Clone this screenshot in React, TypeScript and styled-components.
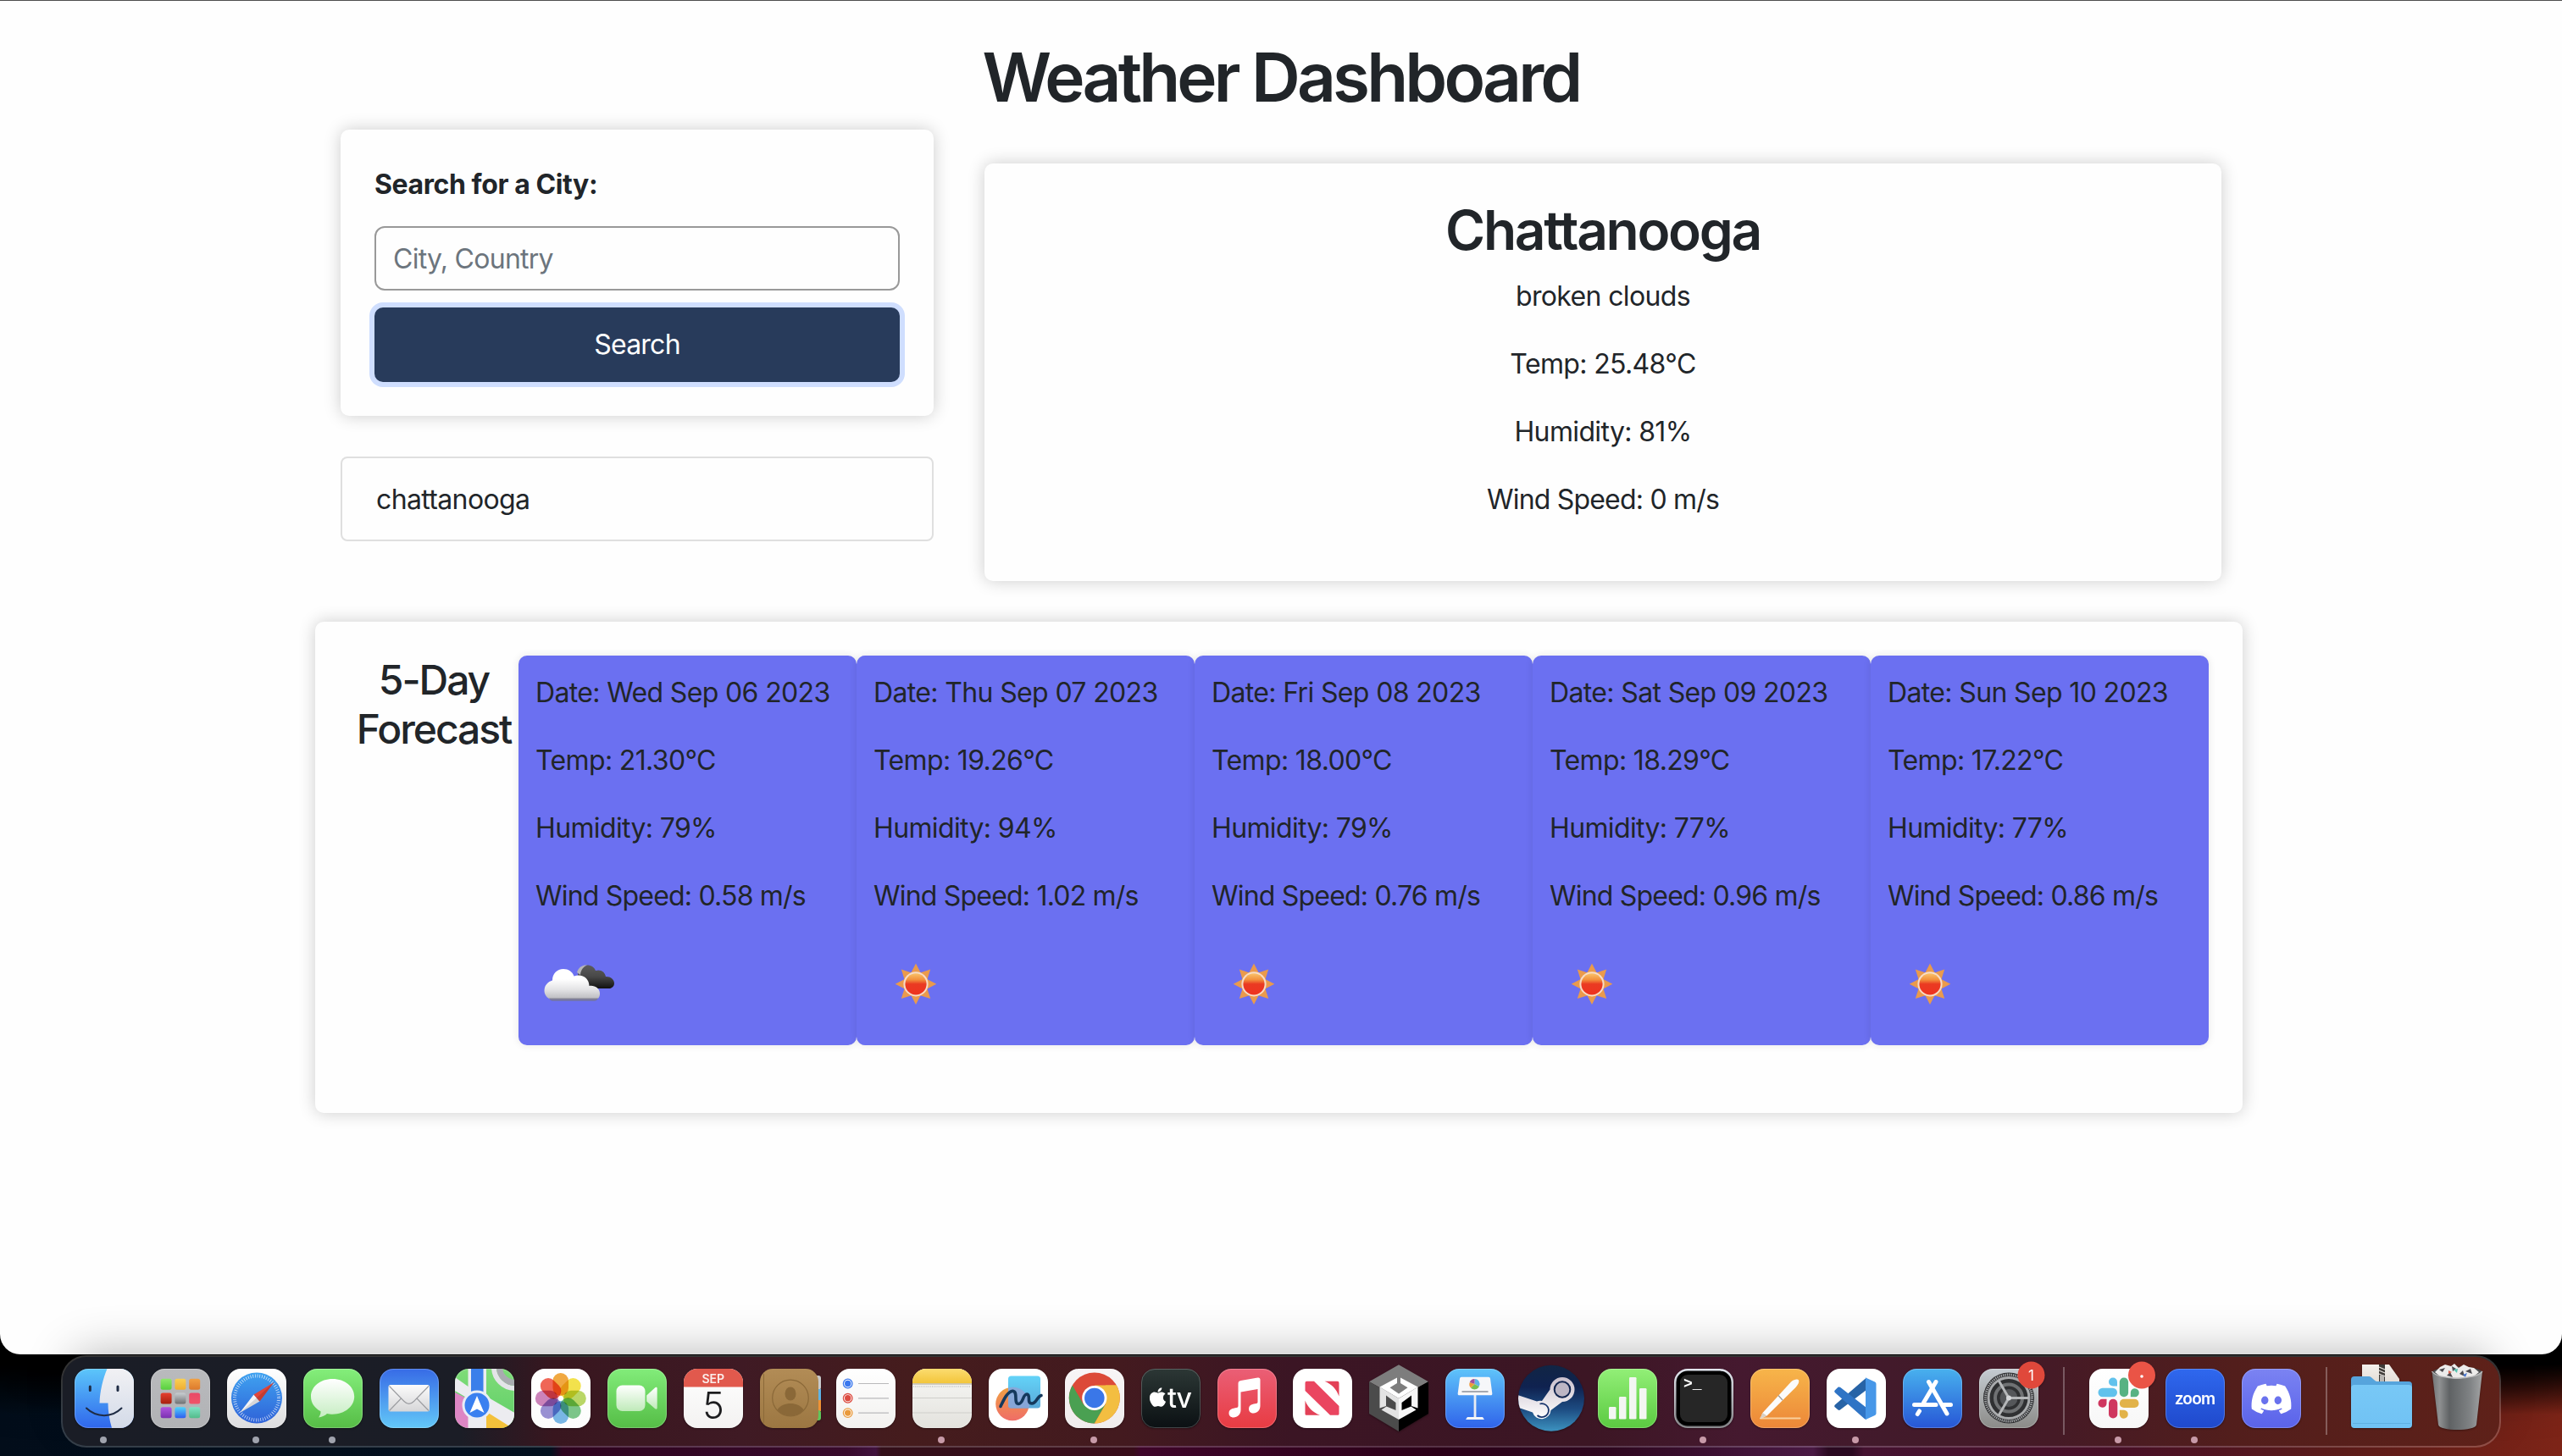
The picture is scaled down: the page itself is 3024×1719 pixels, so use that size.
import React from "react";
import styled, { createGlobalStyle } from "styled-components";
import { FaApple, FaDiscord } from "react-icons/fa";

const GlobalStyle = createGlobalStyle`
  *, *::before, *::after { box-sizing: border-box; }
  html, body { margin: 0; padding: 0; }
  body {
    font-family: Inter, "Liberation Sans", sans-serif;
    font-size: 32px;
    line-height: 1.5;
    color: #212529;
    overflow: hidden;
  }
`;

const Desktop = styled.div`
  height: 1719px;
  display: flex;
  flex-direction: column;
  background:
    linear-gradient(180deg, #000 0, #000 30px, rgba(0, 0, 0, 0) 90px) 0 1580px / 100% 139px no-repeat,
    linear-gradient(90deg, #020d1a 0, #04111f 650px, #2f041f 664px, #3a0b2d 1000px, #431340 1034px, #35101a 1040px,
      #3a0d1a 1338px, #40062b 1346px, #2c0118 1700px, #2f0820 1900px, #4c1a46 2140px, #2c0a22 2158px, #2c0a22 2186px,
      #471332 2200px, #4a1028 2500px, #5d1c1a 2760px, #7d2417 3024px);
`;

const Window = styled.div`
  height: 1599px;
  flex: none;
  display: flex;
  flex-direction: column;
  background: #fefefe;
  border-top: 1px solid #4e4e4e;
  border-radius: 0 0 24px 24px;
  box-shadow: 0 0 0 1px #000, 0 20px 60px 10px rgba(0, 0, 0, 0.7);
`;

const PageTitle = styled.h1`
  margin: 40px 0 16px;
  padding-top: 2px;
  height: 96px;
  font-size: 80px;
  line-height: 96px;
  font-weight: 570;
  letter-spacing: -0.048em;
  text-align: center;
`;

const Columns = styled.div`
  display: grid;
  grid-template-columns: 700px 1460px;
  column-gap: 60px;
  justify-content: center;
  align-items: start;
`;

const Panel = styled.section`
  background: #fefefe;
  border-radius: 10px;
  padding: 40px;
  box-shadow: 0 0 20px rgba(0, 0, 0, 0.2);
`;

const Sidebar = styled.div`
  display: flex;
  flex-direction: column;
  gap: 48px;
`;

const SearchForm = styled(Panel)`
  height: 338px;
  display: flex;
  flex-direction: column;
`;

const Label = styled.label`
  font-weight: 700;
  letter-spacing: -0.013em;
  margin: 1px 0 25px;
`;

const CityInput = styled.input`
  height: 76px;
  border: 2px solid #999;
  border-radius: 12px;
  padding: 0 20px;
  font: inherit;
  letter-spacing: -0.023em;
  background: #fefefe;
  outline: none;
  &::placeholder { color: #6c757d; opacity: 1; }
`;

const SearchButton = styled.button`
  height: 88px;
  margin-top: 20px;
  border: 0;
  border-radius: 10px;
  background: #283b5b;
  color: #fff;
  font: inherit;
  letter-spacing: -0.024em;
  box-shadow: 0 0 0 6px #cfdefe;
`;

const HistoryItem = styled.div`
  height: 100px;
  display: flex;
  align-items: center;
  padding: 6px 40px 4px;
  border: 2px solid #dfdfdf;
  border-radius: 8px;
  letter-spacing: -0.02em;
`;

const CurrentWeather = styled(Panel)`
  margin-top: 40px;
  text-align: center;
`;

const CityName = styled.h2`
  margin: 0 0 16px;
  font-size: 64px;
  line-height: 77px;
  font-weight: 560;
  letter-spacing: -0.036em;
`;

const Fact = styled.p<{ $tight?: boolean }>`
  margin: 0 0 32px;
  line-height: 48px;
  letter-spacing: ${(p) => (p.$tight ? "-0.025em" : "-0.02em")};
  white-space: nowrap;
`;

const Forecast = styled(Panel)`
  width: 2275px;
  margin: 48px 0 0 372px;
  padding-bottom: 80px;
  display: grid;
  grid-template-columns: 200px repeat(5, 399px);
`;

const ForecastTitle = styled.h3`
  margin: 0;
  font-size: 48px;
  line-height: 57.6px;
  font-weight: 550;
  letter-spacing: -0.043em;
  text-align: center;
`;

const DayCard = styled.article`
  height: 460px;
  padding: 20px;
  border-radius: 10px;
  background: #6b70f1;
  box-shadow: 0 0 10px rgba(0, 0, 0, 0.1);
`;

const DayIcon = styled.svg`
  display: block;
  width: 100px;
  height: 100px;
`;

/* Dock */

const DockBar = styled.nav`
  width: 2880px;
  height: 109px;
  flex: none;
  margin: 1px 0 0 72px;
  padding: 14px 3px 0 4px;
  display: flex;
  align-items: flex-start;
  border: 2px solid rgba(255, 255, 255, 0.2);
  border-radius: 30px;
  background: linear-gradient(90deg, #1a1d26 0, #1b1d26 470px, #38161f 580px, #3f1a24 800px, #451c1d 1000px,
    #431a1f 1250px, #3b1524 1450px, #3c1624 1800px, #45192f 1980px, #421a2b 2150px, #451a26 2350px, #521e1c 2560px, #5e2119 2880px);
  background-clip: padding-box;
  box-shadow: 0 -16px 56px -16px rgba(0, 0, 0, 0.3);
  position: relative;
`;

const DockItem = styled.div<{ $w?: number }>`
  flex: 0 0 ${(p) => p.$w ?? 89.92}px;
  display: flex;
  flex-direction: column;
  align-items: center;
`;

const AppIcon = styled.svg`
  display: block;
  width: 70px;
  height: 70px;
  overflow: visible;
  filter: drop-shadow(0 1px 1px rgba(0, 0, 0, 0.35));
`;

const RunningDot = styled.i<{ $cool?: boolean }>`
  width: 8px;
  height: 8px;
  margin: 10px 2px 0 0;
  border-radius: 50%;
  background: ${(p) => (p.$cool ? "#a0a3ad" : "#c79aa8")};
`;

const Divider = styled.hr`
  width: 2px;
  height: 80px;
  margin: -2px 19px 0;
  border: 0;
  flex: none;
  background: rgba(255, 255, 255, 0.28);
`;

const Grad = ({ id, stops, x2 = 0, y2 = 1 }: { id: string; stops: string[]; x2?: number; y2?: number }) => (
  <linearGradient id={id} x1="0" y1="0" x2={x2} y2={y2}>
    {stops.map((c, i) => (
      <stop key={i} offset={i / (stops.length - 1)} stopColor={c} />
    ))}
  </linearGradient>
);

const Tile = ({ id, stops }: { id: string; stops: string[] }) => (
  <>
    <defs>
      <Grad id={id} stops={stops} />
      <clipPath id={id + "-clip"}>
        <rect width="70" height="70" rx="16" />
      </clipPath>
    </defs>
    <rect width="70" height="70" rx="16" fill={`url(#${id})`} />
    <rect x=".5" y=".5" width="69" height="69" rx="15.5" fill="none" stroke="#fff" strokeOpacity=".22" />
  </>
);

const Finder = () => (
  <>
    <Tile id="finder" stops={["#5cc6fa", "#2f66ec"]} />
    <defs><Grad id="finder-r" stops={["#f1f1f4", "#d3dae8"]} /></defs>
    <path clipPath="url(#finder-clip)" d="M38.5 0C33.500 12 30 26 29.500 40.500H39.500C39.500 50 41 60 44 70H70V0Z" fill="url(#finder-r)" />
    <g stroke="#1f2c44" strokeLinecap="round" fill="none">
      <path d="M18.300 21V25.500M51 21V25.500" strokeWidth="3" />
      <path d="M14 46.500C26 58 44 58 55.500 46.500" strokeWidth="2" />
    </g>
  </>
);

const padColors = [
  ["#8fe96c", "#58cf3e"], ["#fad053", "#efae33"], ["#f1a144", "#dd7a2c"],
  ["#e5402f", "#a7200f"], ["#c9ced2", "#6f7173"], ["#e94a68", "#f05468"],
  ["#b054df", "#7a30b0"], ["#4fd3fb", "#2f5cf0"], ["#7fe3c6", "#53bb8a"],
];
const Launchpad = () => (
  <>
    <Tile id="pad" stops={["#b9babd", "#b1b2b5"]} />
    {padColors.map((c, i) => (
      <g key={i}>
        <defs><Grad id={`pad${i}`} stops={c} /></defs>
        <rect x={11.6 + (i % 3) * 16.8} y={11.7 + Math.floor(i / 3) * 16.8} width="13" height="13" rx="2.500" fill={`url(#pad${i})`} />
      </g>
    ))}
  </>
);

const Safari = () => (
  <>
    <Tile id="safari" stops={["#ffffff", "#dcdcde"]} />
    <defs><Grad id="safari-d" stops={["#3fa2f0", "#2f62d8"]} /></defs>
    <circle cx="35" cy="34.500" r="30" fill="url(#safari-d)" />
    <circle cx="35" cy="34.500" r="26" fill="none" stroke="#fff" strokeOpacity=".75" strokeWidth="4" strokeDasharray=".8 1.920" />
    <path d="M15 52 31.500 30.500 38.500 38.500Z" fill="#f4f4f6" />
    <path d="M55.500 16 31.500 30.500 38.500 38.500Z" fill="#e0453a" />
    <path d="M15 52 55.500 16 38.500 38.500Z" fill="#000" opacity=".12" />
  </>
);

const Messages = () => (
  <>
    <Tile id="msg" stops={["#84ee7b", "#56bd46"]} />
    <defs><Grad id="msg-b" stops={["#ffffff", "#c6edc2"]} /></defs>
    <path d="M34.600 12C20 12 9 21.200 9 32.800C9 40 13 46.300 20.500 50.300C20.800 53 19.500 55.500 18.200 57.500C22.500 57 26 55 28 53C30 53.500 32 53.700 34.600 53.700C49 53.700 60.200 44.500 60.200 32.800C60.200 21.200 49 12 34.600 12Z" fill="url(#msg-b)" />
  </>
);

const Mail = () => (
  <>
    <Tile id="mail" stops={["#376be6", "#63c8f8"]} />
    <defs><Grad id="mail-e" stops={["#fbfbfb", "#d6d6d8"]} /></defs>
    <rect x="10.500" y="19" width="48.500" height="31.500" rx="2.500" fill="url(#mail-e)" />
    <path d="M11.500 49.500 26 34.500M58 49.500 43.500 34.500M11.500 20.500 29 38.500C33 42.500 36.500 42.500 40.500 38.500L58 20.500" fill="none" stroke="#9b9ca0" strokeWidth="1.100" />
  </>
);

const Maps = () => (
  <>
    <Tile id="maps" stops={["#7fdc79", "#5fce66"]} />
    <g clipPath="url(#maps-clip)">
      <path d="M0 28V70H16V36Z" fill="#dd86c4" />
      <path d="M36 52H52L66 70H36Z" fill="#f3c13b" />
      <path d="M0 10 17 22V36L0 26Z" fill="#ececf0" />
      <path d="M36 32 74 54V74L36 50Z" fill="#ececf0" />
      <path d="M15.500 0H37V70H15.500Z" fill="#ececf0" />
      <path d="M19 0H33.500V40H19Z" fill="#3b7fea" />
      <circle cx="71" cy="-2" r="25" fill="none" stroke="#e4e4e8" strokeWidth="6" />
      <circle cx="71" cy="-2" r="18.500" fill="none" stroke="#a9abb0" strokeWidth="7" />
    </g>
    <circle cx="26" cy="43" r="17.500" fill="#e9edf6" />
    <circle cx="26" cy="43" r="14.500" fill="#3a80f0" />
    <path d="M26 32 34.500 52 26 47.500 17.500 52Z" fill="#fff" />
  </>
);

const petals = ["#f0a02e", "#f2df38", "#b4d456", "#6fc17d", "#6bb0e4", "#8f86cf", "#c877b4", "#ee5545"];
const Petal = styled.rect`
  mix-blend-mode: multiply;
`;
const Photos = () => (
  <>
    <Tile id="photos" stops={["#ffffff", "#fcfcfc"]} />
    {petals.map((c, i) => (
      <Petal key={c} x="25.500" y="5" width="18.500" height="27" rx="9.200" fill={c} fillOpacity=".9" transform={`rotate(${i * 45} 34.800 35)`} />
    ))}
  </>
);

const FaceTime = () => (
  <>
    <Tile id="ft" stops={["#82ec7a", "#55bd46"]} />
    <defs><Grad id="ft-w" stops={["#ffffff", "#bfeab9"]} /></defs>
    <rect x="10.500" y="19.500" width="34" height="30.500" rx="7" fill="url(#ft-w)" />
    <path d="M46.200 31.500 56 22.500C57.400 21.300 58.700 21.800 58.700 23.500V46C58.700 47.700 57.400 48.200 56 47L46.200 38.500Z" fill="url(#ft-w)" />
  </>
);

const Calendar = () => (
  <>
    <Tile id="cal" stops={["#ffffff", "#f3f2f1"]} />
    <path clipPath="url(#cal-clip)" d="M0 0H70V21.600H0Z" fill="#e1594d" />
    <text x="34.800" y="16.800" textAnchor="middle" fontSize="14" fontWeight="600" fill="#fbeeec">SEP</text>
    <text x="35" y="58.500" textAnchor="middle" fontSize="43" fontWeight="300" fill="#1d1d1f">5</text>
  </>
);

const Contacts = () => (
  <>
    <g>
      <rect x="62" y="8" width="10" height="17" rx="3" fill="#c9cacc" />
      <rect x="62" y="24" width="10" height="14" fill="#5fb4e6" />
      <rect x="62" y="37" width="10" height="13" fill="#ef9234" />
      <rect x="62" y="49" width="10" height="12" rx="3" fill="#5fc85b" />
    </g>
    <defs><Grad id="con" stops={["#b28c56", "#9c7742"]} /></defs>
    <rect width="69" height="70" rx="15" fill="url(#con)" />
    <path d="M4.500 6V64" stroke="#8c6a39" strokeWidth="1" />
    <circle cx="36" cy="34.500" r="21.300" fill="none" stroke="#8a6838" strokeWidth="1.200" />
    <ellipse cx="36" cy="29.500" rx="6.500" ry="8" fill="#8a6838" />
    <path d="M20.500 48.500C24 43 30 41 36 41C42 41 48 43 51.500 48.500C47 53.500 42 55.500 36 55.500C30 55.500 25 53.500 20.500 48.500Z" fill="#8a6838" />
  </>
);

const Reminders = () => (
  <>
    <Tile id="rem" stops={["#ffffff", "#f2f1ef"]} />
    {["#3a78ee", "#dc4c41", "#e99a3c"].map((c, i) => (
      <g key={c}>
        <circle cx="13.700" cy={17.5 + i * 17.3} r="5.300" fill="#fff" stroke={c} strokeWidth="1.300" />
        <circle cx="13.700" cy={17.5 + i * 17.3} r="3.700" fill={c} />
        <path d={`M26 ${17.5 + i * 17.3}H62`} stroke="#b9b9bb" strokeWidth="1.200" />
      </g>
    ))}
  </>
);

const Notes = () => (
  <>
    <Tile id="notes" stops={["#f8f8f6", "#e3e2dd"]} />
    <defs><Grad id="notes-y" stops={["#fbdc70", "#f3c53a"]} /></defs>
    <path clipPath="url(#notes-clip)" d="M0 0H70V17.200H0Z" fill="url(#notes-y)" />
    <path d="M0 18H70" stroke="#a9a494" strokeWidth="1.200" />
    <path d="M1 21H69" stroke="#aaa" strokeWidth="1" strokeDasharray="1 1.200" />
    <path d="M0 34.500H70M0 52H70" stroke="#cfcfcb" strokeWidth="1" />
  </>
);

const Freeform = () => (
  <>
    <Tile id="ff" stops={["#ffffff", "#ffffff"]} />
    <defs>
      <Grad id="ff-o" stops={["#f0a143", "#ef6d67"]} />
      <Grad id="ff-b" stops={["#63d3f8", "#59a9d9"]} />
    </defs>
    <circle cx="28" cy="41.500" r="19.800" fill="url(#ff-o)" />
    <rect x="23" y="8.500" width="38" height="38" rx="3.500" fill="url(#ff-b)" />
    <path d="M23 22.500A19.800 19.800 0 0 1 47.500 46.500H26.500A3.500 3.500 0 0 1 23 43Z" fill="#8ea5d6" opacity=".85" />
    <path d="M14 44.500C18 36 22 27 28.500 26.300C35 27 29 41 35 41.500C41 41.500 40 30 45 30C50.500 30.500 44 41 51 41C56 41 57 33 62 31.500" fill="none" stroke="#15395c" strokeWidth="3.600" strokeLinecap="round" strokeLinejoin="round" />
  </>
);

const Chrome = () => (
  <>
    <Tile id="chrome" stops={["#f8f5f6", "#efecec"]} />
    <circle cx="34.800" cy="34.500" r="30" fill="#dc4a38" />
    <path d="M8.800 19.500A30 30 0 0 0 34.800 64.500L47.800 42L34.800 49.500 21.800 42Z" fill="#4aa052" />
    <path d="M60.800 19.500A30 30 0 0 1 34.800 64.500L47.800 42V19.500Z" fill="#f3be41" />
    <path d="M34.800 19.500H60.800L47.800 28Z" fill="#f3be41" />
    <circle cx="34.800" cy="34.500" r="14.600" fill="#fff" />
    <circle cx="34.800" cy="34.500" r="11.800" fill="#3a77e8" />
  </>
);

const AppleTV = () => (
  <>
    <Tile id="tv" stops={["#2c3735", "#0b1013"]} />
    <FaApple x="6.500" y="20.500" size={26} color="#fff" />
    <text x="31" y="45.500" fontSize="32" fontWeight="500" letterSpacing="-1" fill="#fff">tv</text>
  </>
);

const Music = () => (
  <>
    <Tile id="music" stops={["#ea5f76", "#e83b42"]} />
    <path d="M24.500 17.500C24.500 15 25.500 14.300 27.500 13.900L47.500 10.500C49.500 10.200 50.500 11 50.500 13V43.500C50.500 49 47 52.500 42.500 52.500C39.500 52.500 37 50.500 37 47.500C37 42 42 41.800 46 41C47.200 40.700 47.500 40.200 47.500 39V24L27.500 27.500V48.500C27.500 54 23.500 57.500 19 57.500C15.500 57.500 13.500 55.300 13.500 52.500C13.500 47.500 18 46.800 22.500 46C24 45.600 24.500 45 24.500 43.500Z" fill="#fff" />
  </>
);

const News = () => (
  <>
    <Tile id="news" stops={["#ffffff", "#ffffff"]} />
    <path d="M14.500 17A2 2 0 0 1 16.500 14.800H25L54.500 44V52.500A2 2 0 0 1 52.500 54.800H44L14.500 26Z" fill="#ea4560" />
    <path d="M37.500 14.800H52.500A2 2 0 0 1 54.500 17V32.500C51.500 24 45.500 18 37.500 14.800Z" fill="#e34157" />
    <path d="M14.500 37.500C17.500 45.500 23.500 51.500 32 54.800H16.500A2 2 0 0 1 14.500 52.500Z" fill="#e34157" />
  </>
);

const Unity = () => (
  <>
    <path d="M35-4.800 70 15.200 35 34.500 0 15.200Z" fill="#7d7d7d" />
    <path d="M0 15.200 35 34.500V74L0 53Z" fill="#4b4b4b" />
    <path d="M70 15.200 35 34.500V74L70 53Z" fill="#000" />
    <path d="M33 10.500V17L24.500 22.300 35 29.500 45.500 22.300 37 17V10.500L57.500 21.500 35 35 12.500 21.500Z" fill="#fff" />
    <path d="M12.500 21.500 35 35V60L14.500 48.500 20.500 44.500 31.500 49V40L20 31.500V44L12.500 46.500Z" fill="#e3e3e3" />
    <path d="M57.500 21.500 35 35V60L55.500 48.500 49.500 44.500 38.500 49V40L50 31.500V44L57.500 46.500Z" fill="#f7f7f7" />
  </>
);

const Keynote = () => (
  <>
    <Tile id="key" stops={["#5fc4fa", "#2f63ea"]} />
    <path d="M33.600 30H36.400V58H33.600Z" fill="#e9ecf2" />
    <path d="M26 57H44L46 60H24Z" fill="#f4f5f8" />
    <path d="M19 9.800H51A2 2 0 0 1 53 11.500L55.300 29A2 2 0 0 1 53.300 31.300H16.700A2 2 0 0 1 14.700 29L17 11.500A2 2 0 0 1 19 9.800Z" fill="#f6f7f9" />
    <path d="M19.500 27H50.500" stroke="#8a8f98" strokeWidth="1.500" />
    <path d="M34.500 18V12A6 6 0 0 1 39.800 21Z" fill="#61b3e8" />
    <path d="M34.500 18 39.800 21A6 6 0 0 1 30 22.500Z" fill="#78bf55" />
    <path d="M34.500 18 30 22.500A6 6 0 0 1 28.800 16Z" fill="#ee9b3b" />
    <path d="M34.500 18 28.800 16A6 6 0 0 1 34.500 12Z" fill="#a4509c" />
  </>
);

const Steam = () => (
  <>
    <defs>
      <Grad id="steam" stops={["#112544", "#0f2250", "#1d4c82", "#3d93c0"]} />
      <Grad id="steam-w" stops={["#c9bfcc", "#ffffff"]} />
      <clipPath id="steam-clip"><circle cx="35" cy="34.800" r="39" /></clipPath>
    </defs>
    <circle cx="35" cy="34.800" r="39" fill="url(#steam)" />
    <g clipPath="url(#steam-clip)">
      <path d="M-6 30.500 18 38.500A11 11 0 0 1 24 38L33.500 24.500A14.500 14.500 0 1 1 48 39L34.500 49A11 11 0 0 1 13 51.500L-6 45Z" fill="url(#steam-w)" />
    </g>
    <circle cx="48" cy="24.500" r="9.300" fill="#bdb6c4" stroke="#12254f" strokeWidth="2" />
    <path d="M21.500 41.500A8 8 0 1 1 18.500 55" fill="none" stroke="#16336b" strokeWidth="1.800" />
  </>
);

const Numbers = () => (
  <>
    <Tile id="num" stops={["#92ef77", "#5bca41"]} />
    <g fill="#f3f6f2">
      <rect x="13" y="45" width="8.500" height="14.500" rx="1.300" />
      <rect x="25" y="33" width="8.500" height="26.500" rx="1.300" />
      <rect x="37" y="10" width="8.500" height="49.500" rx="1.300" />
      <rect x="49" y="23" width="8.500" height="36.500" rx="1.300" />
    </g>
  </>
);

const Terminal = () => (
  <>
    <Tile id="term" stops={["#dfe3ec", "#77777a"]} />
    <rect x="2.500" y="2.500" width="65" height="65" rx="13.500" fill="#000" />
    <rect x="7" y="7" width="56" height="56" rx="9" fill="#262626" />
    <text x="11" y="23" fontSize="18" fontWeight="700" fontFamily="'Liberation Mono', monospace" fill="#fff">&gt;_</text>
  </>
);

const Pages = () => (
  <>
    <Tile id="pages" stops={["#f7b54a", "#ec8738"]} />
    <path d="M12 58.500H58.500" stroke="#f9cf9c" strokeWidth="2" strokeLinecap="round" />
    <path d="M11.500 59 14.500 52 48 15.500C52 12 56 12 57 13.500C58 15.500 56 19.500 53 22.500L19.500 55.500Z" fill="#fbfbfb" />
    <path d="M11.500 59 14.500 52 19.500 55.500Z" fill="#d8cfc4" />
    <path d="M33 31.500 38 37" stroke="#999" strokeWidth="1.200" />
  </>
);

const VSCode = () => (
  <>
    <Tile id="vsc" stops={["#ffffff", "#ffffff"]} />
    <path d="M47 10.500 9.700 42.800C9 43.800 9 44.800 10 45.600L13.500 48.500C14.500 49.200 15.500 49 16.300 48.300L47 25Z" fill="#2763a6" />
    <path d="M9.700 25.500 13.500 21.800C14.500 21.200 15.500 21.300 16.300 22L47 46V59.800Q45 60 43.500 58L10 28.200C9 27.300 9 26.300 9.700 25.500Z" fill="#2f74c5" />
    <path d="M46 10.500 57 15.500Q58.500 16.200 58.500 18V52.500Q58.500 54.200 57 55L46 60Z" fill="#4797e8" />
  </>
);

const AppStore = () => (
  <>
    <Tile id="store" stops={["#48b1ee", "#2756d6"]} />
    <g stroke="#fff" strokeWidth="5" strokeLinecap="round">
      <path d="M39 15.500 24.500 40M19.500 50 17.300 53.500" />
      <path d="M30.500 15.500 52 53" />
      <path d="M13.500 42.500H39M48 42.500H56.500" />
    </g>
  </>
);

const Settings = () => (
  <>
    <Tile id="set" stops={["#c5ccd2", "#8b8b88"]} />
    <circle cx="35" cy="34.500" r="30" fill="#2f3032" />
    <circle cx="35" cy="34.500" r="27.500" fill="none" stroke="#a5a7aa" strokeWidth="3" strokeDasharray="1.300 1.100" />
    <circle cx="35" cy="34.500" r="24" fill="none" stroke="#a9abad" strokeWidth="3" />
    <circle cx="35" cy="34.500" r="16" fill="none" stroke="#6f7173" strokeWidth="4" />
    <circle cx="35" cy="34.500" r="10.500" fill="#55575a" />
    <path d="M35 34.500H59M35 34.500 23 13.700M35 34.500 23 55.300" stroke="#b4b6b8" strokeWidth="3" />
    <circle cx="35" cy="34.500" r="3" fill="#d4d6d8" />
    <circle cx="61.500" cy="7.500" r="16" fill="#e0483b" />
    <text x="61.500" y="13.500" textAnchor="middle" fontSize="17" fill="#fff">1</text>
  </>
);

const Slack = () => (
  <>
    <Tile id="slack" stops={["#ffffff", "#f7f7f7"]} />
    <g fill="#62c2ec">
      <path d="M23 15.500A5 5 0 0 1 33 15.500V20.500H28A5 5 0 0 1 23 15.500Z" />
      <rect x="10.500" y="22.800" width="22.500" height="10.500" rx="5.200" />
    </g>
    <g fill="#57b283">
      <rect x="35.800" y="10.500" width="10.300" height="22.800" rx="5.100" />
      <path d="M48.800 28A5 5 0 1 1 54 33.200H48.800Z" />
    </g>
    <g fill="#e2b34a">
      <rect x="35.800" y="35.800" width="22.700" height="10.300" rx="5.100" />
      <path d="M35.800 48.800H41A5 5 0 1 1 35.800 54Z" />
    </g>
    <g fill="#cf375f">
      <path d="M20.500 35.800V41A5 5 0 1 1 15.500 35.800Z" />
      <rect x="23" y="35.800" width="10.300" height="22.700" rx="5.100" />
    </g>
    <circle cx="62" cy="7.500" r="16" fill="#ea5446" />
    <circle cx="62" cy="9" r="1.800" fill="#fff" />
  </>
);

const Zoom = () => (
  <>
    <Tile id="zoom" stops={["#2f68ee", "#1f49cc"]} />
    <text x="34.500" y="41.500" textAnchor="middle" fontSize="19" fontWeight="600" letterSpacing="-.8" fill="#fff">zoom</text>
  </>
);

const Discord = () => (
  <>
    <Tile id="disc" stops={["#7b83f2", "#5a63ea"]} />
    <FaDiscord x="9.500" y="10" size={51} color="#fff" />
  </>
);

const Folder = () => (
  <>
    <defs>
      <Grad id="fold" stops={["#78c8f6", "#70c2f4"]} />
      <Grad id="paper" stops={["#f3f0ec", "#d9d2ca"]} />
    </defs>
    <path d="M12-5H44L56 12V30H12Z" fill="url(#paper)" />
    <path d="M32-5H39V16H32Z" fill="#3d3a37" />
    <path d="M32-2 39 1M32 2 39 5M32 6 39 9" stroke="#e8e4df" strokeWidth="1.300" />
    <rect x="33" y="7" width="5" height="9" rx="1.500" fill="#b9b7b4" />
    <path d="M-1 13A4 4 0 0 1 3 9H20C24 9 26 15 30 15H67A4 4 0 0 1 71 19V66H-1Z" fill="#56a4dc" />
    <rect x="-1" y="19" width="72" height="51" rx="4" fill="url(#fold)" />
    <path d="M1 64.500H69" stroke="#5fb0e2" strokeWidth="1" />
  </>
);

const Trash = () => (
  <>
    <defs>
      <linearGradient id="bin" x1="0" x2="1" y1="0" y2="0">
        <stop offset="0" stopColor="#707274" /><stop offset=".15" stopColor="#8f9192" /><stop offset=".35" stopColor="#5f6264" />
        <stop offset=".75" stopColor="#7f8284" /><stop offset="1" stopColor="#a3a4a5" />
      </linearGradient>
    </defs>
    <ellipse cx="34.500" cy="4" rx="29" ry="6.500" fill="#4a4a4c" />
    <path d="M4.500 3C12 14 56 14 64 3L57 66C56 74 13 74 12 66Z" fill="url(#bin)" />
    <path d="M8 4 14-2 20-5 27-3 31-6 36-1 42-5 48-2 54-1 60 4 54 9 34 12 14 9Z" fill="#ecebea" />
    <path d="M13 1 20-1 17 4ZM28-3 33 0 29 3ZM44 3 50 0 52 6ZM22 8 26 4 29 10ZM37 6 41 2 43 9Z" fill="#4c4b50" />
    <path d="M30 1 35 0 34 5Z" fill="#53c3b0" />
    <path d="M41 7 46 5 44 10Z" fill="#4b79cf" />
    <path d="M24 2 28 4 24 6Z" fill="#d8604d" />
    <path d="M4.500 3C12 14 56 14 64 3" fill="none" stroke="#b9babb" strokeWidth="1.300" />
  </>
);

type App = { name: string; Icon: React.FC; running?: boolean; cool?: boolean };

const apps: App[] = [
  { name: "Finder", Icon: Finder, running: true, cool: true },
  { name: "Launchpad", Icon: Launchpad },
  { name: "Safari", Icon: Safari, running: true, cool: true },
  { name: "Messages", Icon: Messages, running: true, cool: true },
  { name: "Mail", Icon: Mail },
  { name: "Maps", Icon: Maps },
  { name: "Photos", Icon: Photos },
  { name: "FaceTime", Icon: FaceTime },
  { name: "Calendar", Icon: Calendar },
  { name: "Contacts", Icon: Contacts },
  { name: "Reminders", Icon: Reminders },
  { name: "Notes", Icon: Notes, running: true },
  { name: "Freeform", Icon: Freeform },
  { name: "Chrome", Icon: Chrome, running: true },
  { name: "TV", Icon: AppleTV },
  { name: "Music", Icon: Music },
  { name: "News", Icon: News },
  { name: "Unity", Icon: Unity },
  { name: "Keynote", Icon: Keynote },
  { name: "Steam", Icon: Steam },
  { name: "Numbers", Icon: Numbers },
  { name: "Terminal", Icon: Terminal, running: true },
  { name: "Pages", Icon: Pages },
  { name: "VSCode", Icon: VSCode, running: true },
  { name: "AppStore", Icon: AppStore },
  { name: "Settings", Icon: Settings },
];
const recents: App[] = [
  { name: "Slack", Icon: Slack, running: true },
  { name: "Zoom", Icon: Zoom, running: true },
  { name: "Discord", Icon: Discord },
];
const places: App[] = [
  { name: "Folder", Icon: Folder },
  { name: "Trash", Icon: Trash },
];

const DockGroup = ({ items, width }: { items: App[]; width?: number }) => (
  <>
    {items.map(({ name, Icon, running, cool }) => (
      <DockItem key={name} $w={width}>
        <AppIcon viewBox="0 0 70 70"><Icon /></AppIcon>
        {running && <RunningDot $cool={cool} />}
      </DockItem>
    ))}
  </>
);

const Clouds = () => (
  <DayIcon viewBox="0 0 100 100">
    <defs>
      <Grad id="cl-w" stops={["#ffffff", "#ffffff", "#e4e4e6", "#b9b9bd"]} />
      <Grad id="cl-d" stops={["#5c5c5c", "#474747", "#111"]} />
    </defs>
    <path d="M50 42C49 34 54 25.500 61 25.500C66 25.500 69.500 28 71 32C77 30 82 33.500 83 39C88 38.500 93 42 93 47C93 50.500 90 53 87 53H60Z" fill="url(#cl-d)" />
    <path d="M49 34C51 27.500 56 25 61 25.500C57 27 53.500 31 53 37Z" fill="#b5b5b8" />
    <path d="M19 66C13.500 65 10.500 60 10.500 55.500C10.500 49 15 45 20 43.500C20 35.500 25.500 30 33 30C39 30 43.500 33 45.500 38.500C55 35 63.500 41 63.500 50C70 49 76 53 76 59C76 63.500 74 65.500 71 66Z" fill="url(#cl-w)" />
    <path d="M16 64.500H74Q72.500 67.700 70 67.700H20Q17.500 67.700 16 64.500Z" fill="#77778c" opacity=".8" />
  </DayIcon>
);

const Sun = () => (
  <DayIcon viewBox="0 0 100 100">
    <defs>
      <linearGradient id="sun" x1="0" y1="0" x2="0" y2="1">
        <stop offset="0" stopColor="#f9c26a" />
        <stop offset=".3" stopColor="#f2913c" />
        <stop offset=".5" stopColor="#ea3a22" />
        <stop offset="1" stopColor="#ee3320" />
      </linearGradient>
    </defs>
    <g fill="#ea9a4c">
      {[0, 45, 90, 135, 180, 225, 270, 315].map((a) => (
        <path key={a} d="M50 23.500 57 37H43Z" transform={`rotate(${a} 50 47.800)`} />
      ))}
    </g>
    <circle cx="50" cy="47.800" r="14.600" fill="#f7dcc6" />
    <circle cx="50" cy="47.800" r="12.600" fill="url(#sun)" />
  </DayIcon>
);

const days = [
  { date: "Wed Sep 06 2023", temp: "21.30", humidity: 79, wind: "0.58", Icon: Clouds },
  { date: "Thu Sep 07 2023", temp: "19.26", humidity: 94, wind: "1.02", Icon: Sun },
  { date: "Fri Sep 08 2023", temp: "18.00", humidity: 79, wind: "0.76", Icon: Sun },
  { date: "Sat Sep 09 2023", temp: "18.29", humidity: 77, wind: "0.96", Icon: Sun },
  { date: "Sun Sep 10 2023", temp: "17.22", humidity: 77, wind: "0.86", Icon: Sun },
];

export default function App() {
  return (
    <Desktop>
      <GlobalStyle />
      <Window>
        <PageTitle>Weather Dashboard</PageTitle>
        <Columns>
          <Sidebar>
            <SearchForm>
              <Label htmlFor="city">Search for a City:</Label>
              <CityInput id="city" placeholder="City, Country" />
              <SearchButton type="button">Search</SearchButton>
            </SearchForm>
            <HistoryItem>chattanooga</HistoryItem>
          </Sidebar>
          <CurrentWeather>
            <CityName>Chattanooga</CityName>
            <Fact>broken clouds</Fact>
            <Fact>Temp: 25.48°C</Fact>
            <Fact>Humidity: 81%</Fact>
            <Fact $tight>Wind Speed: 0 m/s</Fact>
          </CurrentWeather>
        </Columns>
        <Forecast>
          <ForecastTitle>5-Day Forecast</ForecastTitle>
          {days.map(({ date, temp, humidity, wind, Icon }) => (
            <DayCard key={date}>
              <Fact>{`Date: ${date}`}</Fact>
              <Fact>{`Temp: ${temp}°C`}</Fact>
              <Fact>{`Humidity: ${humidity}%`}</Fact>
              <Fact $tight>{`Wind Speed: ${wind} m/s`}</Fact>
              <Icon />
            </DayCard>
          ))}
        </Forecast>
      </Window>
      <DockBar>
        <DockGroup items={apps} />
        <Divider />
        <DockGroup items={recents} width={90} />
        <Divider />
        <DockGroup items={places} width={90} />
      </DockBar>
    </Desktop>
  );
}
